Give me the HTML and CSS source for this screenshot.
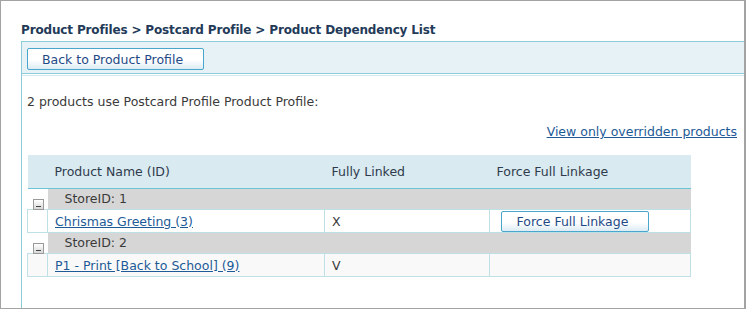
FILE: index.html
```html
<!DOCTYPE html>
<html>
<head>
<meta charset="utf-8">
<link rel="stylesheet" href="styles.css">
</head>
<body>
<div class="frame">
  <h1 class="title">Product Profiles &gt; Postcard Profile &gt; Product Dependency List</h1>
  <div class="panel">
    <div class="toolbar">
      <button class="btn btn-back">Back to Product Profile</button>
    </div>
    <div class="panel-body">
      <p class="summary">2 products use Postcard Profile Product Profile:</p>
      <div class="filter"><a href="#" class="link">View only overridden products</a></div>
      <table class="grid">
        <colgroup>
          <col class="c-exp"><col class="c-name"><col class="c-linked"><col class="c-force">
        </colgroup>
        <thead>
          <tr class="head"><th></th><th>Product Name (ID)</th><th>Fully Linked</th><th>Force Full Linkage</th></tr>
        </thead>
        <tbody>
          <tr class="group">
            <td class="exp"><span class="minus"></span></td>
            <td colspan="3" class="group-label">StoreID: 1</td>
          </tr>
          <tr class="row">
            <td class="exp-cell"></td>
            <td><a href="#" class="link">Chrismas Greeting (3)</a></td>
            <td>X</td>
            <td class="btn-cell"><button class="btn btn-force">Force Full Linkage</button></td>
          </tr>
          <tr class="group">
            <td class="exp"><span class="minus"></span></td>
            <td colspan="3" class="group-label">StoreID: 2</td>
          </tr>
          <tr class="row alt">
            <td class="exp-cell"></td>
            <td><a href="#" class="link">P1 - Print [Back to School] (9)</a></td>
            <td>V</td>
            <td></td>
          </tr>
        </tbody>
      </table>
    </div>
  </div>
</div>
</body>
</html>
```

FILE: styles.css
```css
* { box-sizing: border-box; }
html, body { margin: 0; padding: 0; background: #fff; }
body {
  font-family: "DejaVu Sans", sans-serif;
  font-size: 12.5px;
  color: #3a3a3a;
}
.frame {
  width: 746px;
  height: 309px;
  border: 1px solid #a3a3a3;
  border-right-width: 2px;
  padding: 21px 0 0 20px;
  overflow: hidden;
}
.title {
  margin: 0;
  font-size: 12px;
  font-weight: bold;
  letter-spacing: -0.15px;
  line-height: 15px;
  padding-top: 1px;
  height: 19px;
  color: #233a58;
}
.panel {
  border-top: 1px solid #8ccbd8;
  border-left: 1px solid #8ccbd8;
  height: 300px;
}
.toolbar {
  background: #e7f2f7;
  height: 32px;
  padding: 6px 0 0 5px;
  border-bottom: 1px solid #8ccbd8;
}
.panel-body {
  border-top: 1px solid #d5e8ee;
  margin-top: 1px;
  padding: 0 7px 0 5px;
}
.btn {
  font-family: inherit;
  font-size: 12.5px;
  color: #1f4a86;
  background: linear-gradient(to bottom, #ffffff 0%, #ffffff 55%, #dcecf4 100%);
  border: 1px solid #4aa6cc;
  border-radius: 2px;
  height: 22px;
  padding: 0 6px 0 0;
  display: block;
}
.btn-back { width: 177px; }
.btn-force { width: 148px; height: 21px; padding-right: 5px; }
.summary {
  margin: 0;
  padding-top: 18px;
  line-height: 15px;
  height: 48px;
}
.filter {
  text-align: right;
  line-height: 15px;
  height: 31px;
}
.link { color: #1d5a96; text-decoration: underline; }
.grid {
  border-collapse: collapse;
  width: 663px;
  table-layout: fixed;
}
.c-exp { width: 20px; }
.c-name { width: 277px; }
.c-linked { width: 165px; }
.c-force { width: 201px; }
.head { height: 33px; }
.grid th {
  background: #d9eaf1;
  text-align: left;
  font-weight: normal;
  color: #2f3b4c;
  padding: 0 0 0 7px;
  border-bottom: 1px solid #6cc4d8;
}
.group { height: 21px; }
.row { height: 23px; }
.grid td {
  padding: 1px 0 0 7px;
  border: 1px solid #bfe0e6;
}
.group td { border: none; padding-top: 0; }
.group .group-label {
  background: #d6d6d6;
  padding-left: 17px;
  color: #3a3a3a;
}
.group td.exp {
  padding: 0;
  position: relative;
  background: #fff;
}
.minus {
  position: absolute;
  left: 5px;
  bottom: -1px;
  width: 11px;
  height: 11px;
  border: 1px solid #9a9a9a;
  background: linear-gradient(to bottom, #ffffff, #d8d8d8);
}
.minus::after {
  content: "";
  position: absolute;
  left: 2px;
  top: 6px;
  width: 5px;
  height: 1px;
  background: #444;
}
.row td { background: #fff; }
.row.alt td { background: #f9f9f9; }
.grid td.btn-cell { padding: 1px 0 0 11px; }
```
